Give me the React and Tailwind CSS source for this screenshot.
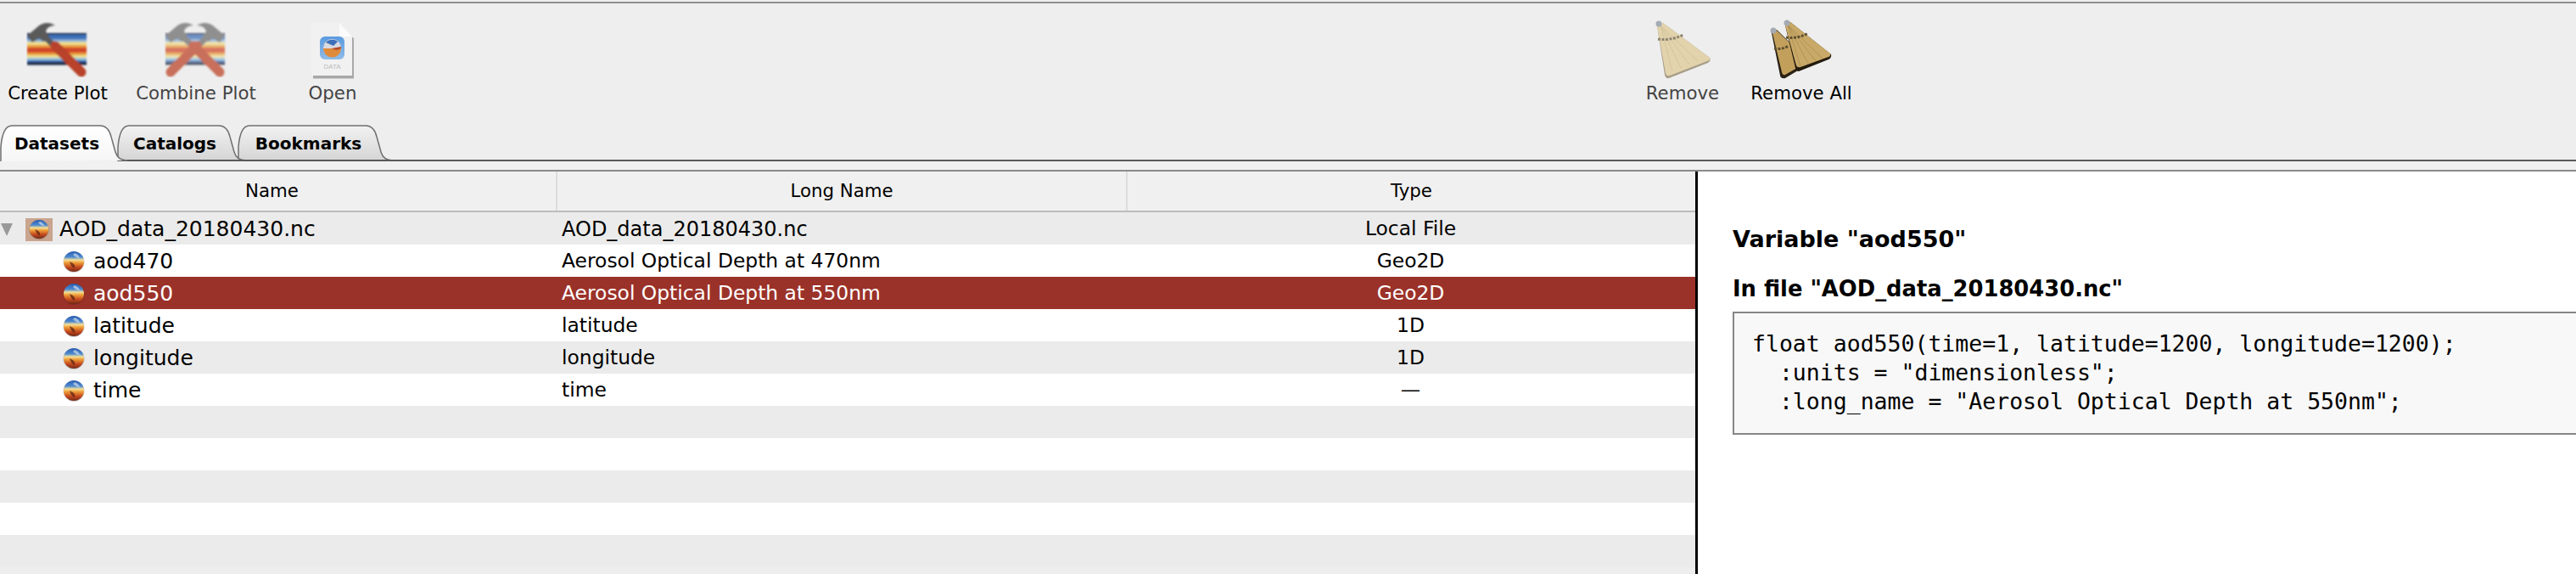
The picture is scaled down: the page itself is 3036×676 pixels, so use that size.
import React from "react";

const uiFont = "font-['DejaVu_Sans',sans-serif]";

const rows = [
  { name: "aod470", longName: "Aerosol Optical Depth at 470nm", type: "Geo2D" },
  { name: "aod550", longName: "Aerosol Optical Depth at 550nm", type: "Geo2D", selected: true },
  { name: "latitude", longName: "latitude", type: "1D" },
  { name: "longitude", longName: "longitude", type: "1D" },
  { name: "time", longName: "time", type: "—" },
];

const emptyRows = [0, 1, 2, 3, 4];

function Globe({ id, size = 26 })
{
  return (
    <svg width={size} height={size} viewBox="0 0 26 26" className="shrink-0">
      <defs>
        <linearGradient id={id} x1="0" y1="0" x2="0" y2="1">
          <stop offset="0" stopColor="#2a5cb0" />
          <stop offset="0.28" stopColor="#4f8ad0" />
          <stop offset="0.42" stopColor="#f4e09a" />
          <stop offset="0.56" stopColor="#ee9c35" />
          <stop offset="0.78" stopColor="#c4471f" />
          <stop offset="1" stopColor="#6e2a18" />
        </linearGradient>
      </defs>
      <circle cx="13" cy="13.5" r="12.5" fill="#000" opacity="0.2" />
      <circle cx="13" cy="13" r="12" fill={`url(#${id})`} />
      <path d="M8 13 C12 15 15 16 14 21 C11 20 9 17 8 13 Z" fill="#5c2415" opacity="0.75" />
      <path d="M14 3 C17 4 19 6 20 9 C17 9 14 7 12 5 Z" fill="#dfe9f5" opacity="0.6" />
    </svg>
  );
}

function Stripes({ x, y, w, h, opacity = 1 })
{
  const bands = [
    ["#1c2a4a", 0, 0.05],
    ["#3d6fb8", 0.05, 0.15],
    ["#8fb6d8", 0.2, 0.08],
    ["#f0dc8c", 0.28, 0.1],
    ["#e89a3a", 0.38, 0.08],
    ["#d2472a", 0.46, 0.16],
    ["#e89a3a", 0.62, 0.08],
    ["#f0e08c", 0.7, 0.08],
    ["#9cc5dc", 0.78, 0.08],
    ["#3d6fb8", 0.86, 0.06],
    ["#1a2540", 0.92, 0.08],
  ];
  return (
    <g opacity={opacity}>
      {bands.map(([c, o, bh]) => (
        <rect key={o} x={x} y={y + o * h} width={w} height={bh * h + 0.5} fill={c} />
      ))}
    </g>
  );
}

function Hammer({ flip, grey })
{
  const t = flip ? "translate(72 0) scale(-1 1)" : undefined;
  return (
    <g transform={t}>
      <path d="M17 15 L35 32" stroke={grey ? "#8f8f8f" : "#5a5a5a"} strokeWidth="7" />
      <path d="M34 30 L65 61" stroke={grey ? "#c9705c" : "#b8432a"} strokeWidth="11" strokeLinecap="round" />
      <path d="M1 18 L14 7 C20 2 28 2 34 6 C28 6 24 9 23 13 L27 19 L20 25 L15 21 L7 26 Z" fill={grey ? "#8f8f8f" : "#5a5a5a"} />
    </g>
  );
}

function PlotIcon({ id, combine })
{
  return (
    <svg width="74" height="70" viewBox="0 0 74 70">
      <defs>
        <filter id={id}><feGaussianBlur stdDeviation="0.9" /></filter>
      </defs>
      <g filter={`url(#${id})`}>
        <Stripes x={1} y={15} w={70} h={37} opacity={combine ? 0.72 : 1} />
        <Hammer grey={combine} />
        {combine && <Hammer flip grey />}
      </g>
    </svg>
  );
}

function OpenIcon()
{
  return (
    <svg width="56" height="68" viewBox="0 0 56 68">
      <defs>
        <filter id="open-blur"><feGaussianBlur stdDeviation="0.7" /></filter>
        <linearGradient id="open-tile" x1="0" y1="0" x2="0" y2="1">
          <stop offset="0" stopColor="#5a9be0" />
          <stop offset="1" stopColor="#8fbbe8" />
        </linearGradient>
      </defs>
      <g filter="url(#open-blur)">
        <path d="M4 3 L38 3 L52 18 L52 65 L4 65 Z" fill="#a8a8a8" transform="translate(1 1.5)" />
        <path d="M3 1 L36 1 L51 17 L51 63 L3 63 Z" fill="#f1f1f1" />
        <path d="M36 1 L36 17 L51 17 Z" fill="#fbfbfb" />
        <rect x="13" y="17" width="29" height="27" rx="6" fill="url(#open-tile)" />
        <circle cx="27.5" cy="30.5" r="10.5" fill="#d9d9e0" />
        <path d="M17 31 A10.5 10.5 0 0 0 38 31 Z" fill="#e08a3a" />
        <path d="M27 31 A10.5 10.5 0 0 0 38 31 L38 29 Z" fill="#b5492a" />
        <path d="M20 24 C24 20 30 20 34 23 L29 28 Z" fill="#3d6fb8" />
      </g>
      <text x="27.5" y="55" textAnchor="middle" fontSize="8" fill="#bbb" fontFamily="Liberation Sans">DATA</text>
    </svg>
  );
}

function Straws({ x, y, ends, color })
{
  return (
    <g stroke={color} strokeWidth="0.8" opacity="0.55">
      {ends.map(([ex, ey]) => (
        <path key={ex} d={`M${x} ${y} L${ex} ${ey}`} />
      ))}
    </g>
  );
}

function RemoveIcon()
{
  return (
    <svg width="68" height="72" viewBox="0 0 68 72">
      <defs>
        <filter id="broom-blur"><feGaussianBlur stdDeviation="0.7" /></filter>
      </defs>
      <g filter="url(#broom-blur)">
        <path d="M4 9 L11 5 L66 46 Q68 49 64 52 L18 70 Q14 71 13 66 Z" fill="#a89e88" />
        <path d="M4 9 L11 5 L66 46 Q68 48 63 50 L19 67 Q15 68 14 64 Z" fill="#e2d3ad" />
        <Straws x={8} y={8} color="#c4b48c" ends={[[22, 62], [32, 58], [42, 54], [52, 50]]} />
        <path d="M5 24 Q20 26 35 19" stroke="#8f8672" strokeWidth="3" strokeDasharray="3 1.5" fill="none" />
        <circle cx="6" cy="6" r="3.5" fill="#a4abb3" />
      </g>
    </svg>
  );
}

function RemoveAllIcon()
{
  return (
    <svg width="78" height="72" viewBox="0 0 78 72">
      <defs>
        <filter id="brooms-blur"><feGaussianBlur stdDeviation="0.6" /></filter>
      </defs>
      <g filter="url(#brooms-blur)">
        <path d="M4 17 L10 13 L50 52 L20 70 Q15 71 14 67 Z" fill="#2a2012" />
        <path d="M5 17 L10 14 L48 50 L20 66 Q17 67 16 63 Z" fill="#c2a05c" />
        <path d="M7 35 Q15 37 24 32" stroke="#5f4f30" strokeWidth="3" strokeDasharray="3 1.5" fill="none" />
        <circle cx="6" cy="14" r="3.5" fill="#a4abb3" />
        <path d="M20 8 L26 4 L74 42 Q75 46 71 48 L36 62 Q33 62 32 58 Z" fill="#241a0e" />
        <path d="M20 8 L26 4 L73 41 Q74 44 71 45 L38 57 Q34 58 33 55 Z" fill="#c9a968" />
        <Straws x={23} y={7} color="#94773d" ends={[[38, 56], [47, 53], [56, 50], [64, 47]]} />
        <path d="M21 22 Q35 24 47 17" stroke="#5f4f30" strokeWidth="3" strokeDasharray="3 1.5" fill="none" />
        <circle cx="22" cy="5" r="3.5" fill="#a4abb3" />
      </g>
    </svg>
  );
}

function ToolButton({ width, label, dim, children })
{
  return (
    <div className={`flex flex-col items-center ${width}`}>
      <div className="h-[68px] flex items-end justify-center">{children}</div>
      <span className={`mt-[2px] text-[21.3px] leading-[28px] whitespace-nowrap ${dim ? "text-[#444]" : "text-black"}`}>{label}</span>
    </div>
  );
}

function Tab({ label, w, className, active })
{
  const id = `tab-${label}`;
  const outline = `M1 43 L1 26 C2 14 5 1 14 1 L${w - 32} 1 C${w - 25} 1 ${w - 21} 6 ${w - 19} 14 L${w - 14} 32 C${w - 12} 39 ${w - 8} 42 ${w} 42`;
  return (
    <div className={`relative h-[43px] flex items-center justify-center ${className}`}>
      <svg className="absolute inset-0" width={w} height="43" viewBox={`0 0 ${w} 43`}>
        <defs>
          <linearGradient id={id} x1="0" y1="0" x2="0" y2="1">
            <stop offset="0" stopColor={active ? "#ffffff" : "#f2f2f2"} />
            <stop offset="1" stopColor={active ? "#f6f6f6" : "#d4d4d4"} />
          </linearGradient>
        </defs>
        <path d={`${outline} L1 43 Z`} fill={`url(#${id})`} />
        <path d={outline} fill="none" stroke="#707070" strokeWidth="1.5" />
        {!active && <path d={`M1 42 L${w} 42`} stroke="#5a5a5a" strokeWidth="2" />}
      </svg>
      <span className="relative font-bold text-[20px] text-black pr-[16px]">{label}</span>
    </div>
  );
}

function Row({ selected, striped, children })
{
  return (
    <div className={`h-[38px] pt-[2px] flex items-center text-[23.4px] whitespace-nowrap ${selected ? "bg-[#9b3229] text-white" : striped ? "bg-[#ebebeb] text-black" : "bg-white text-black"}`}>
      {children}
    </div>
  );
}

export default function App()
{
  return (
    <div className={`w-[3036px] h-[676px] overflow-hidden bg-[#eeeeee] flex flex-col ${uiFont}`}>
      <div className="mt-[2px] h-[2px] bg-[#8f8f8f]" />

      <div className="h-[143px] pt-[22px] pr-[823px] flex justify-between">
        <div className="flex">
          <ToolButton width="w-[136px]" label="Create Plot"><PlotIcon id="plot-a" /></ToolButton>
          <ToolButton width="w-[190px]" label="Combine Plot" dim><PlotIcon id="plot-b" combine /></ToolButton>
          <ToolButton width="w-[132px]" label="Open" dim><OpenIcon /></ToolButton>
        </div>
        <div className="flex">
          <ToolButton width="w-[100px]" label="Remove" dim><RemoveIcon /></ToolButton>
          <ToolButton width="w-[180px]" label="Remove All"><RemoveAllIcon /></ToolButton>
        </div>
      </div>

      <div className="h-[43px] flex">
        <Tab label="Datasets" w={150} className="w-[150px] z-30" active />
        <Tab label="Catalogs" w={152} className="w-[152px] -ml-[12px] z-20" />
        <Tab label="Bookmarks" w={183} className="w-[183px] -ml-[10px] z-10" />
        <div className="flex-1 border-b-2 border-[#5a5a5a]" />
      </div>

      <div className="h-[10px] bg-[#f1f1f1]" />
      <div className="h-[2px] bg-[#8a8a8a]" />

      <div className="flex-1 flex min-h-0">
        <div className="w-[1998px] flex flex-col">
          <div className="h-[48px] shrink-0 bg-[#f0f0f0] border-b-2 border-[#bcbcbc] grid grid-cols-[655px_672px_671px] text-[21.3px] text-black">
            <div className="flex items-center justify-center pr-[14px]">Name</div>
            <div className="flex items-center justify-center border-l-2 border-[#dcdcdc]">Long Name</div>
            <div className="flex items-center justify-center border-l-2 border-[#dcdcdc]">Type</div>
          </div>

          <Row striped>
            <div className="w-[655px] flex items-center">
              <div className="ml-[1px] w-0 h-0 border-l-[7px] border-r-[7px] border-t-[15px] border-l-transparent border-r-transparent border-t-[#999]" />
              <div className="ml-[15px] w-[32px] h-[27px] bg-[#c9a48e] flex items-center justify-center"><Globe id="globe-file" size={24} /></div>
              <span className="ml-[8px] text-[25px]">AOD_data_20180430.nc</span>
            </div>
            <div className="w-[672px] pl-[7px] text-[24px]">AOD_data_20180430.nc</div>
            <div className="w-[671px] text-center">Local File</div>
          </Row>

          {rows.map((row, i) => (
            <Row key={row.name} selected={row.selected} striped={i % 2 === 1 && !row.selected}>
              <div className="w-[655px] pl-[74px] flex items-center gap-[10px]">
                <Globe id={`globe-${row.name}`} />
                <span className="text-[25px]">{row.name}</span>
              </div>
              <div className="w-[672px] pl-[7px]">{row.longName}</div>
              <div className="w-[671px] text-center">{row.type}</div>
            </Row>
          ))}

          {emptyRows.map((n) => (
            <Row key={n} striped={n % 2 === 0}><span /></Row>
          ))}
        </div>

        <div className="flex-1 bg-white border-l-[3px] border-black pl-[41px] pt-[62px] min-w-0">
          <h2 className="font-bold text-[27px] leading-[36px] text-black">Variable "aod550"</h2>
          <h3 className="mt-[22px] font-bold text-[25.8px] leading-[36px] text-black">In file "AOD_data_20180430.nc"</h3>
          <pre className="mt-[9px] h-[145px] bg-[#f8f8f8] border-2 border-r-0 border-[#868686] pl-[21px] pt-[19px] font-['DejaVu_Sans_Mono',monospace] text-[26.5px] leading-[34px] text-black">{`float aod550(time=1, latitude=1200, longitude=1200);
  :units = "dimensionless";
  :long_name = "Aerosol Optical Depth at 550nm";`}</pre>
        </div>
      </div>
    </div>
  );
}
